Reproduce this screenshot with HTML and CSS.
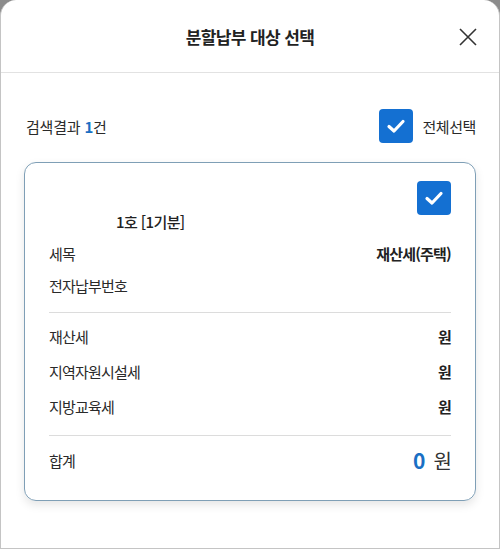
FILE: index.html
```html
<!DOCTYPE html>
<html lang="ko">
<head>
    <meta charset="UTF-8">
    <meta name="viewport" content="width=device-width, initial-scale=1.0">
    <title>분할납부 대상 선택</title>
    <link rel="stylesheet" href="styles.css">
</head>
<body>
    <div class="modal">
        <div class="modal-header">
            <h1 class="modal-title">분할납부 대상 선택</h1>
            <button class="btn-close" aria-label="닫기">
                <svg width="18" height="18" viewBox="0 0 18 18">
                    <path d="M1 1 L17 17 M17 1 L1 17" stroke="#333" stroke-width="1.6" fill="none"/>
                </svg>
            </button>
        </div>
        <div class="modal-body">
            <div class="result-bar">
                <p class="result-count">검색결과 <strong>1</strong>건</p>
                <label class="check-all">
                    <span class="checkbox">
                        <svg width="22" height="22" viewBox="0 0 22 22"><path d="M4 11.5 L9 16 L18 6.5" stroke="#fff" stroke-width="3.2" fill="none" stroke-linecap="round" stroke-linejoin="round"/></svg>
                    </span>
                    전체선택
                </label>
            </div>

            <div class="card">
                <div class="card-top">
                    <span class="checkbox">
                        <svg width="22" height="22" viewBox="0 0 22 22"><path d="M4 11.5 L9 16 L18 6.5" stroke="#fff" stroke-width="3.2" fill="none" stroke-linecap="round" stroke-linejoin="round"/></svg>
                    </span>
                </div>
                <p class="card-title">1호 [1기분]</p>
                <div class="row">
                    <span>세목</span>
                    <span class="val">재산세(주택)</span>
                </div>
                <div class="row">
                    <span>전자납부번호</span>
                    <span class="val"></span>
                </div>
                <hr class="divider">
                <div class="row wide">
                    <span>재산세</span>
                    <span class="val">원</span>
                </div>
                <div class="row wide">
                    <span>지역자원시설세</span>
                    <span class="val">원</span>
                </div>
                <div class="row wide">
                    <span>지방교육세</span>
                    <span class="val">원</span>
                </div>
                <hr class="divider divider-sum">
                <div class="row total">
                    <span>합계</span>
                    <span class="sum"><strong>0</strong> 원</span>
                </div>
            </div>
        </div>
    </div>
</body>
</html>
```

FILE: styles.css
```css
* {
    box-sizing: border-box;
}
body {
    margin: 0;
    background-color: #8c8c8c;
    font-family: "Noto Sans CJK KR", "Noto Sans", sans-serif;
    color: #2a2a2a;
}
.modal {
    background-color: #fff;
    height: 549px;
    border: 1px solid #c4c4c4;
    border-top: none;
    border-radius: 16px 16px 0 0;
    overflow: hidden;
}
.modal-header {
    position: relative;
    height: 73px;
    border-bottom: 1px solid #e2e2e2;
    display: flex;
    align-items: center;
    justify-content: center;
}
.modal-title {
    margin: 0;
    font-size: 17px;
    font-weight: 700;
    letter-spacing: -0.6px;
    color: #222;
}
.btn-close {
    position: absolute;
    right: 22px;
    top: 28px;
    width: 18px;
    height: 18px;
    padding: 0;
    border: none;
    background: none;
}
.modal-body {
    padding: 36px 23px 0 23px;
}
.result-bar {
    display: flex;
    justify-content: space-between;
    align-items: center;
    margin-bottom: 19px;
    padding-left: 2px;
}
.result-count {
    margin: 0;
    font-size: 15px;
    letter-spacing: -0.2px;
}
.result-count strong {
    color: #1a6fc4;
    font-weight: 700;
}
.check-all {
    display: flex;
    align-items: center;
    gap: 9px;
    font-size: 15px;
    letter-spacing: -0.4px;
}
.checkbox {
    width: 34px;
    height: 34px;
    border-radius: 4px;
    background-color: #1470d2;
    display: flex;
    align-items: center;
    justify-content: center;
}
.card {
    border: 1.5px solid #7f9fb6;
    border-radius: 12px;
    padding: 18px 24px 26px 24px;
    box-shadow: 0 4px 10px rgba(0, 0, 0, 0.1);
}
.card-top {
    display: flex;
    justify-content: flex-end;
}
.card-title {
    margin: -4px 0 0 67px;
    font-size: 15px;
    line-height: 22px;
    font-weight: 500;
    letter-spacing: -0.6px;
    color: #222;
}
.row {
    display: flex;
    justify-content: space-between;
    align-items: center;
    font-size: 15px;
    line-height: 22px;
    letter-spacing: -0.8px;
    margin-top: 10px;
}
.row.wide {
    margin-top: 13px;
}
.row .val {
    font-weight: 700;
    color: #222;
}
.divider {
    border: none;
    border-top: 1px solid #dcdcdc;
    margin: 15px 0 5px 0;
}
.divider-sum {
    margin-top: 17px;
}
.row.total {
    line-height: 26px;
    margin-top: 11px;
}
.sum {
    font-size: 20px;
    color: #333;
}
.sum strong {
    color: #1a6fc4;
    font-size: 21px;
    font-weight: 700;
    margin-right: 4px;
}
```
